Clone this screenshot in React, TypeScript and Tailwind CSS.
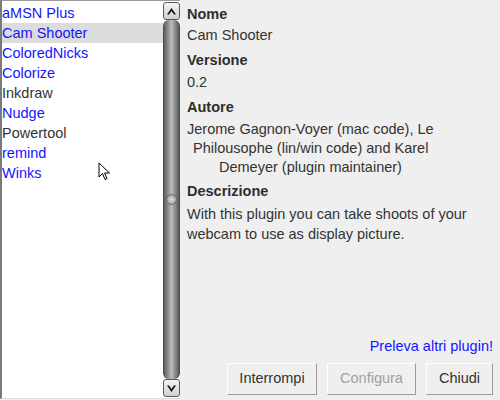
import React from 'react';

type TPlugin = { name: string; loaded: boolean };

const plugins: TPlugin[] = [
  { name: 'aMSN Plus', loaded: true },
  { name: 'Cam Shooter', loaded: true },
  { name: 'ColoredNicks', loaded: true },
  { name: 'Colorize', loaded: true },
  { name: 'Inkdraw', loaded: false },
  { name: 'Nudge', loaded: true },
  { name: 'Powertool', loaded: false },
  { name: 'remind', loaded: true },
  { name: 'Winks', loaded: true },
];

function ArrowButton({ down }: { down?: boolean }) {
  return (
    <div className="flex h-[18px] w-full items-center justify-center rounded-[3px] border border-[#5a5a5a] bg-linear-to-b from-[#f4f4f4] to-[#cfcfcf]">
      <svg width="11" height="9" viewBox="0 0 11 9" className={down ? 'rotate-180' : ''}>
        <path d="M5.5 1 L10 7.5 L8 7.5 L5.5 4 L3 7.5 L1 7.5 Z" fill="#111" />
      </svg>
    </div>
  );
}

function Scrollbar() {
  return (
    <div className="flex w-[17px] shrink-0 flex-col py-[1px]">
      <ArrowButton />
      <div className="relative flex flex-1 items-center justify-center rounded-b-[6px] rounded-t-[6px] border-x border-[#4a4a4a] bg-linear-to-r from-[#5e5e5e] via-[#bdbdbd] to-[#5a5a5a]">
        <div className="h-[11px] w-[11px] rounded-full border border-[#666] bg-radial from-[#e0e0e0] to-[#8a8a8a]" />
      </div>
      <ArrowButton down />
    </div>
  );
}

function Cursor() {
  return (
    <svg className="absolute left-[96px] top-[161px]" width="13" height="19" viewBox="0 0 13 19">
      <path
        d="M1 1 L1 15 L4.5 11.5 L7 17.5 L9 16.7 L6.6 11 L11.5 11 Z"
        fill="#fff"
        stroke="#000"
        strokeWidth="1"
        strokeLinejoin="round"
      />
    </svg>
  );
}

export default function App() {
  return (
    <div
      className="flex h-[400px] w-[500px] bg-[#efefef] text-[14.5px] text-[#333]"
      style={{ fontFamily: '"Liberation Sans", Arial, sans-serif' }}
    >
      {/* Plugin list */}
      <div className="relative flex h-[399px] w-[180px] shrink-0 border-l-2 border-t border-l-[#7a7a7a] border-t-[#9a9a9a] border-b border-b-[#dcdcdc] bg-white">
        <ul className="flex-1 pt-[2px]">
          {plugins.map((p, i) => (
            <li
              key={p.name}
              className={`h-[20px] leading-[20px] ${i === 1 ? 'bg-[#dcdcdc]' : ''} ${
                p.loaded ? 'text-[#1414ff]' : 'text-[#333]'
              }`}
            >
              {p.name}
            </li>
          ))}
        </ul>
        <Scrollbar />
        <Cursor />
      </div>

      {/* Detail */}
      <div className="flex flex-1 flex-col pl-[7px] pr-[7px] pt-[4px] pb-[5px]">
        <div className="font-bold leading-[20px] text-[#2e2e2e]">Nome</div>
        <div className="mt-[2px] leading-[19px]">Cam Shooter</div>
        <div className="mt-[5px] font-bold leading-[20px] text-[#2e2e2e]">Versione</div>
        <div className="mt-[3px] leading-[19px]">0.2</div>
        <div className="mt-[5px] font-bold leading-[20px] text-[#2e2e2e]">Autore</div>
        <div className="mt-[3px] leading-[19px]">
          <div>Jerome Gagnon-Voyer (mac code), Le</div>
          <div className="pl-[6px]">Philousophe (lin/win code) and Karel</div>
          <div className="pl-[32px]">Demeyer (plugin maintainer)</div>
        </div>
        <div className="mt-[4px] font-bold leading-[20px] text-[#2e2e2e]">Descrizione</div>
        <div className="mt-[3px] leading-[20px]">
          <div>With this plugin you can take shoots of your</div>
          <div>webcam to use as display picture.</div>
        </div>

        <div className="flex-1" />

        <div className="text-right leading-[20px] text-[#1414ff]">Preleva altri plugin!</div>
        <div className="mt-[7px] flex justify-end gap-[10px]">
          <button className="h-[32px] w-[90px] border border-b-[#9a9a9a] border-l-white border-r-[#9a9a9a] border-t-white bg-[#efefef] text-[#333]">
            Interrompi
          </button>
          <button className="h-[32px] w-[89px] border border-b-[#9a9a9a] border-l-white border-r-[#9a9a9a] border-t-white bg-[#efefef] text-[#a0a0a0]">
            Configura
          </button>
          <button className="h-[32px] w-[67px] border border-b-[#9a9a9a] border-l-white border-r-[#9a9a9a] border-t-white bg-[#efefef] text-[#333]">
            Chiudi
          </button>
        </div>
      </div>
    </div>
  );
}
